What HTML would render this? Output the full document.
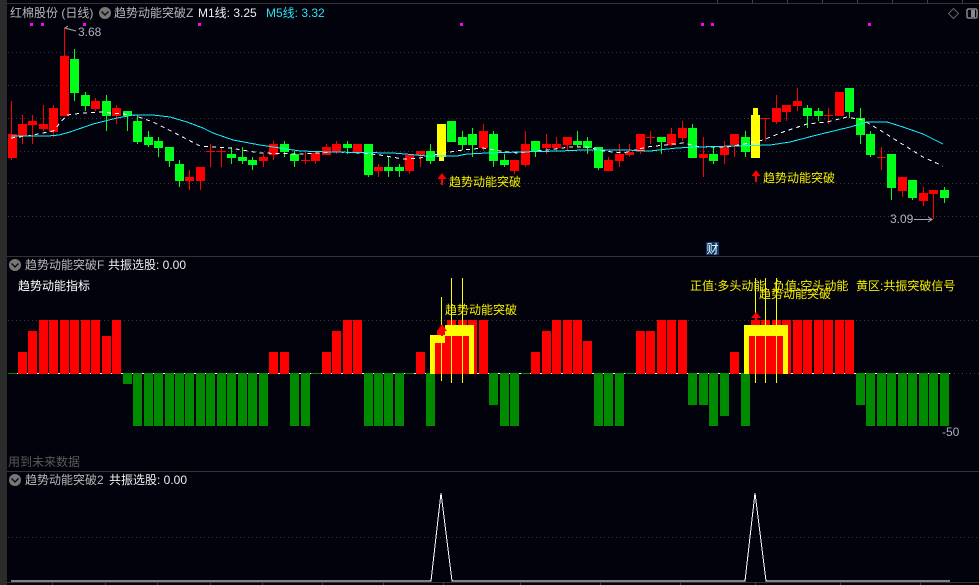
<!DOCTYPE html>
<html lang="zh">
<head>
<meta charset="utf-8">
<title>趋势动能突破</title>
<style>
html,body{margin:0;padding:0;background:#02020c;width:979px;height:585px;overflow:hidden}
svg{display:block;position:absolute;left:0;top:0}
text{font-family:"Liberation Sans","Noto Sans CJK SC",sans-serif;font-size:12px}
</style>
</head>
<body>
<svg width="979" height="585" viewBox="0 0 979 585" xmlns="http://www.w3.org/2000/svg">
<rect width="979" height="585" fill="#02020c"/>
<!-- separators -->
<g shape-rendering="crispEdges">
<path d="M7 3.5H979M7 256.5H979M7 471.5H979M7 582.5H979" stroke="#333" fill="none"/>
<path d="M717.5 0V3M752.5 0V3M787.5 0V3M822.5 0V3M857.5 0V3M892.5 0V3M927.5 0V3M962.5 0V3M52.5 583V585M105.5 583V585M157.5 583V585M210.5 583V585M262.5 583V585M322.5 583V585M383.5 583V585M443.5 583V585M520.5 583V585M600.5 583V585M680.5 583V585M755.5 583V585M840.5 583V585M920.5 583V585" stroke="#444" fill="none"/>
<!-- grid -->
<path d="M8 52.5H979M8 85.5H979M8 118.5H979M8 151.5H979M8 183.5H979M8 216.5H979M8 320.5H979M950 373.5H979M8 537.5H979" stroke="#3a3a3a" stroke-dasharray="1 3" fill="none"/>
<!-- magenta marks -->
<path d="M30 23h3v3h-3zM41 23h3v3h-3zM83 23h3v3h-3zM198 23h3v3h-3zM460 23h3v3h-3zM701 23h3v3h-3zM711 23h3v3h-3zM868 23h3v3h-3z" fill="#f0f"/>
<!-- red wicks -->
<path fill="none" stroke="#f00" stroke-width="1" d="M11.5 101V160M22.5 115V144M32.5 115V144M43.5 105V131M53.5 105V137M64.5 28V116M95.5 98V111M116.5 105V124M189.5 170V190M200.5 167V190M210.5 144V167M221.5 147V167M263.5 154V167M273.5 141V160M305.5 152V164M315.5 151V164M326.5 144V155M336.5 141V154M378.5 164V177M409.5 154V174M420.5 151V167M483.5 124V151M514.5 160V174M525.5 131V167M546.5 134V154M556.5 137V151M567.5 137V150M608.5 157V171M619.5 144V167M629.5 144V157M640.5 134V154M650.5 131V144M671.5 128V146M682.5 121V141M703.5 137V177M724.5 141V164M734.5 134V157M765.5 118V141M776.5 95V124M786.5 105V121M797.5 88V111M828.5 108V124M881.5 147V170M902.5 177V197M923.5 187V206M933.5 190V219"/>
<!-- red bodies -->
<path fill="none" stroke="#f00" stroke-width="9" d="M12.5 134V158M22.5 124V136M32.5 121V125M43.5 124V129M53.5 108V132M64.5 56V116M95.5 101V109M116.5 108V116M189.5 177V181M200.5 167V181M210.5 151V152M221.5 151V152M263.5 157V161M273.5 144V155M305.5 160V161M315.5 153V161M326.5 147V155M336.5 144V152M357.5 144V152M378.5 167V171M409.5 155V171M420.5 151V155M483.5 131V148M514.5 160V171M525.5 144V165M546.5 144V148M556.5 144V148M567.5 137V145M608.5 160V171M619.5 154V161M629.5 152V155M640.5 134V152M650.5 137V138M671.5 134V145M682.5 128V138M703.5 154V158M724.5 147V155M734.5 134V145M765.5 118V119M776.5 108V122M786.5 105V112M797.5 101V106M828.5 115V116M839.5 92V116M881.5 157V158M902.5 177V191M923.5 193V201M933.5 190V194"/>
<!-- green wicks -->
<path fill="none" stroke="#00ff19" stroke-width="1" d="M74.5 49V101M85.5 92V111M106.5 95V131M127.5 111V131M137.5 115V144M148.5 131V147M158.5 137V157M169.5 147V167M179.5 160V187M231.5 147V164M242.5 147V164M252.5 157V170M284.5 141V157M294.5 151V167M347.5 141V154M368.5 144V177M388.5 157V177M399.5 164V177M430.5 144V164M462.5 131V150M472.5 128V157M493.5 131V167M504.5 154V167M535.5 141V157M577.5 131V147M587.5 137V154M598.5 147V170M661.5 137V154M692.5 124V158M713.5 147V164M745.5 131V157M807.5 105V128M818.5 108V121M849.5 88V118M860.5 108V144M870.5 131V157M891.5 154V200M912.5 180V200M944.5 187V203"/>
<!-- green bodies -->
<path fill="none" stroke="#00ff19" stroke-width="9" d="M74.5 59V93M85.5 95V106M106.5 101V116M127.5 111V116M137.5 121V142M148.5 137V145M158.5 141V148M169.5 147V161M179.5 164V181M231.5 154V158M242.5 157V161M252.5 160V165M284.5 144V152M294.5 154V161M347.5 144V148M368.5 144V175M388.5 167V171M399.5 167V171M430.5 151V161M451.5 121V142M462.5 137V145M472.5 134V145M493.5 134V161M504.5 160V165M535.5 141V151M577.5 141V145M587.5 141V148M598.5 147V168M661.5 137V142M692.5 128V158M713.5 154V161M745.5 137V152M807.5 108V116M818.5 111V116M849.5 88V112M860.5 118V135M870.5 134V155M891.5 154V188M912.5 180V198M944.5 190V198"/>
<!-- yellow candles -->
<path d="M437 124h9v33h-2v4h-5v-4h-2zM751 115h2v-7h5v7h2v43h-9z" fill="#ff0"/>
<!-- MA lines -->
<polyline fill="none" stroke="#fff" stroke-width="1" stroke-dasharray="4 4" points="11,138 27,136 43,133 53,131 67,115 83,113 100,112 133,115 153,122 173,132 200,146 230,148 260,153 300,154 335,152 363,153 380,155 403,159 420,158 443,153 463,150 483,148 500,151 517,153 547,150 570,147 587,147 603,151 623,153 647,147 683,143 700,147 727,147 750,143 763,140 783,132 807,124 827,122 847,117 863,120 883,132 907,147 923,157 943,166"/>
<polyline fill="none" stroke="#12f2ff" stroke-width="1" points="11,136 48,136 59,135 70,132 93,124 117,118 133,115 153,115 170,117 187,122 203,128 213,133 233,140 260,145 300,151 330,152 393,153 405,154 427,156 457,156 467,154 487,153 520,152 560,151 583,150 625,150 650,151 677,148 697,147 770,145 790,142 817,135 850,127 867,122 887,122 903,127 923,134 943,144"/>
</g>

<!-- header -->
<text x="10" y="17" fill="#b8b8b8">红棉股份 (日线)</text>
<circle cx="105" cy="13" r="6" fill="#777"/>
<path d="M101.500 11.500L105 15L108.500 11.500" fill="none" stroke="#111" stroke-width="1.500"/>
<text x="114" y="17" fill="#b8b8b8">趋势动能突破Z</text>
<text x="198" y="17" fill="#f0f0f0">M1线: 3.25</text>
<text x="266" y="17" fill="#2de2f0">M5线: 3.32</text>
<path d="M953.500 8.500L958.500 13.500L953.500 18.500L948.500 13.500Z" fill="none" stroke="#666"/>
<rect x="967" y="9" width="10" height="9" rx="1.500" fill="none" stroke="#888" stroke-width="1.500"/>
<rect x="971" y="10" width="4" height="7" fill="#888"/>

<!-- price annotations -->
<path d="M68 26L65 28L68 29M65 28L76 31" fill="none" stroke="#aaa"/>
<text x="78" y="36" fill="#a8b4c0">3.68</text>
<text x="890" y="223" fill="#a8b4c0">3.09</text>
<path d="M914 219.500H932M928 217L932 219.500L928 222" fill="none" stroke="#aaa"/>

<!-- signals, top panel -->
<path d="M442 173L446.500 179H443V185H441V179H437.500ZM756 170L760.500 176H757V182H755V176H751.500Z" fill="#f00"/>
<text x="449" y="186" fill="#f5f000">趋势动能突破</text>
<text x="763" y="182" fill="#f5f000">趋势动能突破</text>

<!-- 财 badge -->
<rect x="706" y="242" width="13" height="13" fill="#0b3a6b"/>
<text x="706.500" y="253" fill="#fff">财</text>

<!-- panel 2 -->
<circle cx="15" cy="265" r="6" fill="#777"/>
<path d="M11.500 263.500L15 267L18.500 263.500" fill="none" stroke="#111" stroke-width="1.500"/>
<text x="25" y="269" fill="#b8b8b8">趋势动能突破F</text>
<text x="108" y="269" fill="#f0f0f0">共振选股: 0.00</text>
<text x="18" y="290" fill="#fff">趋势动能指标</text>
<text x="8" y="466" fill="#5a5a5a">用到未来数据</text>
<text x="942" y="436" fill="#a8b4c0">-50</text>

<g shape-rendering="crispEdges">
<path d="M8 373.500H950" stroke="#fff" fill="none"/>
<path d="M8 373.500H17M311 373.500H321M405 373.500H414M521 373.500H530M625 373.500H635" stroke="#080" fill="none"/>
<!-- red bars -->
<path fill="none" stroke="#f00" stroke-width="9" d="M22.500 352V374M32.500 331V374M43.500 320V374M53.500 320V374M64.500 320V374M74.500 320V374M85.500 320V374M95.500 320V374M106.500 336V374M116.500 320V374M273.500 352V374M284.500 352V374M326.500 352V374M336.500 331V374M347.500 320V374M357.500 320V374M420.500 352V374M441.500 331V374M451.500 320V374M462.500 320V374M472.500 320V374M483.500 320V374M535.500 352V374M546.500 331V374M556.500 320V374M567.500 320V374M577.500 320V374M587.500 341V374M640.500 331V374M650.500 331V374M661.500 320V374M671.500 320V374M682.500 320V374M734.500 352V374M755.500 320V374M765.500 320V374M776.500 320V374M786.500 320V374M797.500 320V374M807.500 320V374M818.500 320V374M828.500 320V374M839.500 320V374M849.500 320V374"/>
<!-- green bars -->
<path fill="none" stroke="#008a00" stroke-width="9" d="M127.500 373V384M137.500 373V426M148.500 373V426M158.500 373V426M169.500 373V426M179.500 373V426M189.500 373V426M200.500 373V426M210.500 373V426M221.500 373V426M231.500 373V426M242.500 373V426M252.500 373V426M263.500 373V426M294.500 373V426M305.500 373V426M368.500 373V426M378.500 373V426M388.500 373V426M399.500 373V426M430.500 373V426M493.500 373V405M504.500 373V426M514.500 373V426M598.500 373V426M608.500 373V426M619.500 373V426M692.500 373V405M703.500 373V405M713.500 373V426M724.500 373V416M745.500 373V426M860.500 373V405M870.500 373V426M881.500 373V426M891.500 373V426M902.500 373V426M912.500 373V426M923.500 373V426M933.500 373V426M944.500 373V426"/>
<!-- inner red under yellow -->
<path d="M435 343h10v-7h24v38h-34zM749 336h34v38h-34z" fill="#f00"/>
<!-- yellow zones -->
<path d="M430 335h15v-10h29v49h-5v-38h-24v7h-10v31h-5zM744 325h44v49h-5v-38h-34v38h-5z" fill="#ff0"/>
<!-- yellow thin lines -->
<path d="M441.500 297V381M451.500 278V383M462.500 278V383M755.500 278V383M765.500 278V383M776.500 278V383" stroke="#ff0" fill="none"/>
</g>
<path d="M442 324L447 331H443V336H441V331H437ZM756 312L761 318H757V325H755V318H751Z" fill="#f00"/>
<text x="445" y="314" fill="#f5f000">趋势动能突破</text>
<text x="690" y="290" fill="#f5f000">正值:多头动能</text>
<text x="773" y="290" fill="#f5f000">负值:空头动能</text>
<text x="856" y="290" fill="#f5f000">黄区:共振突破信号</text>
<text x="759" y="298" fill="#f5f000">趋势动能突破</text>

<!-- panel 3 -->
<circle cx="15" cy="480" r="6" fill="#777"/>
<path d="M11.500 478.500L15 482L18.500 478.500" fill="none" stroke="#111" stroke-width="1.500"/>
<text x="25" y="484" fill="#b8b8b8">趋势动能突破2</text>
<text x="109" y="484" fill="#f0f0f0">共振选股: 0.00</text>
<polyline fill="none" stroke="#fff" stroke-width="1" shape-rendering="crispEdges" points="11,581 431,581 441,493 452,581 745,581 755,493 766,581 950,581"/>

<!-- left gutter -->
<rect x="0" y="0" width="7" height="585" fill="#2b2b2b"/>
</svg>
</body>
</html>
